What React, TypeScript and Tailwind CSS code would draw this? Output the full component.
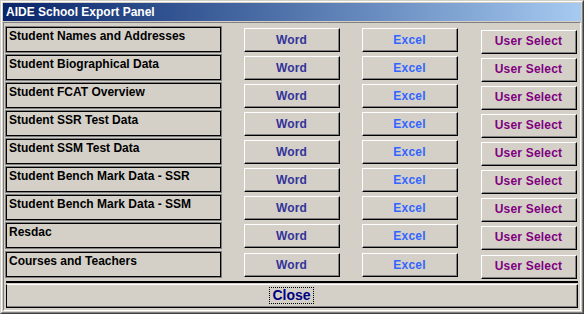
import React from "react";

const rows = [
  "Student Names and Addresses",
  "Student Biographical Data",
  "Student FCAT Overview",
  "Student SSR Test Data",
  "Student SSM Test Data",
  "Student Bench Mark Data - SSR",
  "Student Bench Mark Data - SSM",
  "Resdac",
  "Courses and Teachers",
];

const font = { fontFamily: '"Liberation Sans", Arial, sans-serif' };

const RaisedButton: React.FC<{ label: string; color: string }> = ({ label, color }) => (
  <button
    className="w-[96px] h-[24px] border-t border-l border-t-white border-l-white border-r border-b border-r-black border-b-black bg-[#d4d0c8] p-0"
    style={font}
  >
    <div className="w-full h-full border-r border-b border-r-[#808080] border-b-[#808080] flex items-center justify-center">
      <span className={`text-[12px] font-bold tracking-[0.2px] ${color}`}>{label}</span>
    </div>
  </button>
);

export default function App() {
  return (
    <div className="w-[584px] h-[314px] bg-[#d4d0c8] border border-t-[#d4d0c8] border-l-[#d4d0c8] border-r-[#404040] border-b-[#404040]" style={font}>
      <div className="w-full h-full border border-t-white border-l-white border-r-[#808080] border-b-[#808080] flex flex-col p-px">
        <div className="h-[18px] shrink-0 bg-gradient-to-r from-[#0a246a] to-[#a6caf0] flex items-center pl-[3px]">
          <span className="text-white text-[12px] font-bold leading-none">AIDE School Export Panel</span>
        </div>
        <div className="flex-1 mt-[1px] border border-t-[#808080] border-l-[#808080] border-r-white border-b-white pl-px pr-[1px] pt-[3px] flex flex-col">
          {rows.map((r, i) => (
            <div key={r} className={`flex items-start ${i === 8 ? "h-[29px] mt-[1px]" : "h-[28px]"}`}>
              <div className="w-[217px] h-[27px] border border-[#808080]">
                <div className="w-full h-full border border-black px-[2px] pt-[1px]">
                  <span className="text-[12px] font-bold text-black leading-[14px] block">{r}</span>
                </div>
              </div>
              <div className="flex mt-[2px] ml-[22px] gap-[22px]">
                <RaisedButton label="Word" color="text-[#333399]" />
                <RaisedButton label="Excel" color="text-[#3366ff]" />
                <div className="ml-px">
                  <RaisedButton label="User Select" color="text-[#800080]" />
                </div>
              </div>
            </div>
          ))}
          <div className="mt-[1px] h-[2px] border-t border-b border-black mx-[1px]" />
          <div className="mx-[1px] mt-[1px] h-[24px] border border-t-white border-l-black border-r-black border-b-black bg-[#d4d0c8]">
            <div className="w-full h-full border-r border-b border-r-[#808080] border-b-[#808080] flex items-center justify-center">
              <span className="text-[14px] font-bold text-[#000080] border border-dotted border-black px-[2px] leading-[15px]">Close</span>
            </div>
          </div>
        </div>
      </div>
    </div>
  );
}
